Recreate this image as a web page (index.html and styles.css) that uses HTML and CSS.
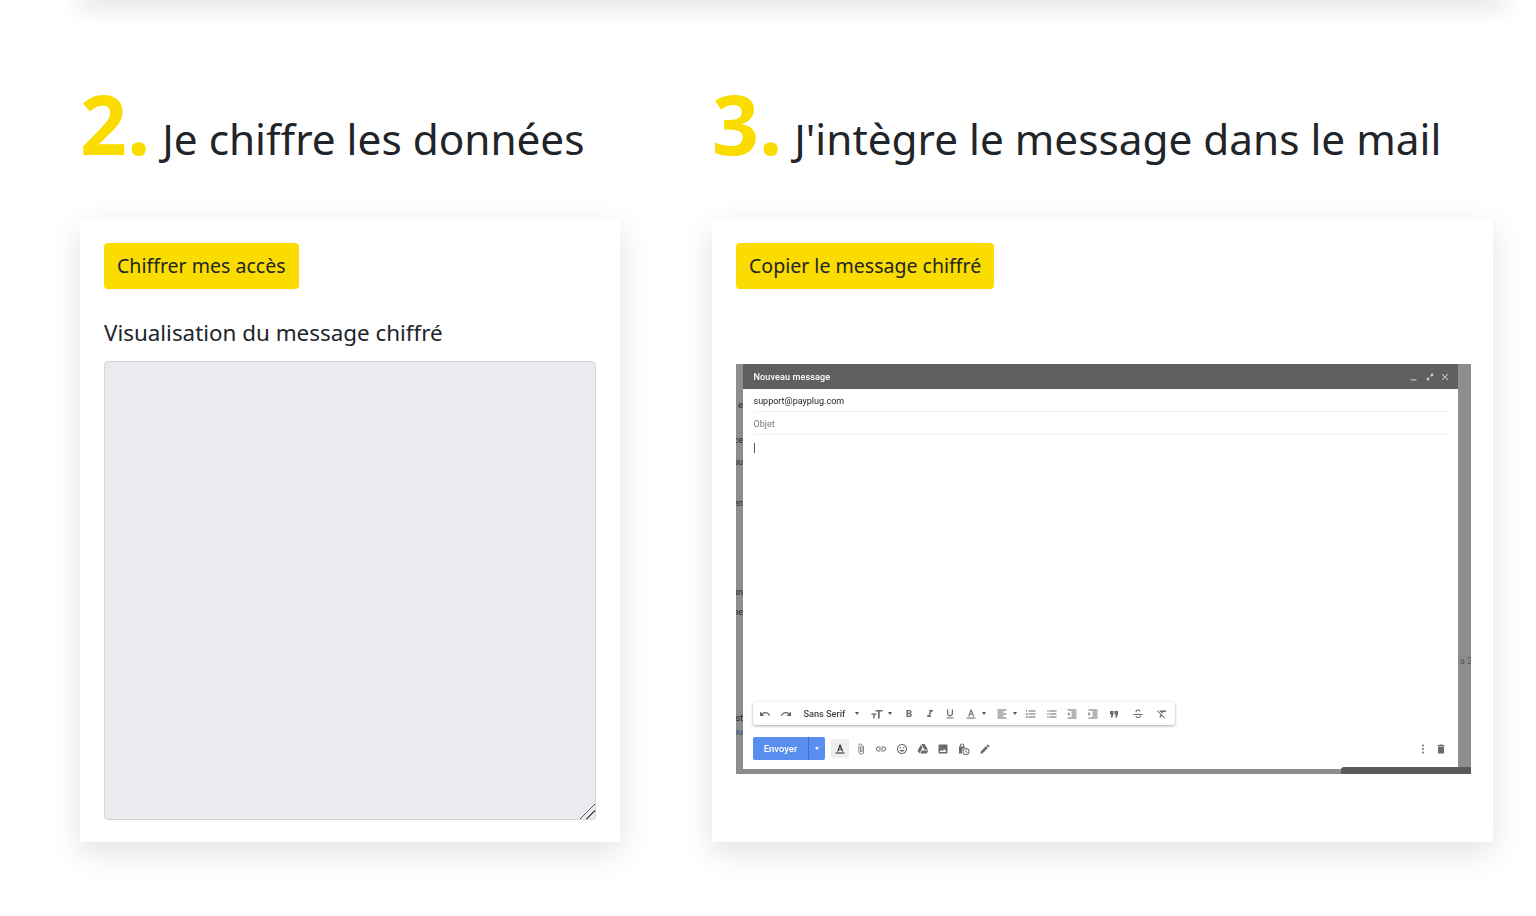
FILE: index.html
```html
<!DOCTYPE html>
<html lang="fr">
<head>
<meta charset="utf-8">
<title>Chiffrement</title>
<link rel="stylesheet" href="styles.css">
</head>
<body>
<div class="top-edge"></div>
<main class="steps">
  <h2 class="step-title"><span class="num">2.</span> Je chiffre les données</h2>
  <h2 class="step-title"><span class="num">3.</span> J'intègre le message dans le mail</h2>
  <section class="card">
    <button class="btn">Chiffrer mes accès</button>
    <label class="field-label" for="out">Visualisation du message chiffré</label>
    <textarea id="out" class="output" disabled></textarea>
  </section>
  <section class="card">
    <button class="btn">Copier le message chiffré</button>
    <figure class="shot">
      <span class="bg-t t1">e</span><span class="bg-t t2">ce</span><span class="bg-t t3">su</span><span class="bg-t t4">en</span><span class="bg-t t5">un</span><span class="bg-t t6">ne</span><span class="bg-t t7">st</span><span class="bg-t t8">ou</span><span class="bg-t t9">a 2</span>
      <div class="compose">
        <div class="c-head">
          <span class="c-title">Nouveau message</span>
          <span class="c-win">
            <svg class="wi" viewBox="0 0 10 10"><path d="M1 8h7v1.200H1z"/></svg>
            <svg class="wi" viewBox="0 0 10 10"><path d="M5.500 1H9v3.500L7.800 3.200 6.300 4.700 5.300 3.700 6.800 2.200zM4.500 9H1V5.500l1.200 1.300 1.500-1.500 1 1-1.500 1.500z"/></svg>
            <svg class="wi" viewBox="0 0 10 10"><path d="M1.700 1L5 4.300 8.300 1 9 1.700 5.700 5 9 8.300 8.300 9 5 5.700 1.700 9 1 8.300 4.300 5 1 1.700z"/></svg>
          </span>
        </div>
        <div class="c-row to">support@payplug.com</div>
        <div class="c-row subject">Objet</div>
        <div class="c-body"><span class="caret"></span></div>
        <div class="fmt">
          <svg class="ic" viewBox="0 0 24 24"><path d="M12.500 8c-2.650 0-5.050.99-6.900 2.600L2 7v9h9l-3.620-3.620c1.390-1.160 3.160-1.880 5.120-1.880 3.540 0 6.550 2.310 7.600 5.500l2.370-.78C21.080 11.030 17.150 8 12.500 8z"/></svg>
          <svg class="ic" viewBox="0 0 24 24"><path d="M18.400 10.600C16.550 8.990 14.150 8 11.500 8c-4.650 0-8.580 3.030-9.960 7.220L3.900 16c1.050-3.190 4.050-5.500 7.600-5.500 1.950 0 3.730.72 5.120 1.880L13 16h9V7l-3.600 3.600z"/></svg>
          <span class="font-name">Sans Serif</span><i class="tri wide"></i>
          <svg class="ic" viewBox="0 0 24 24"><path d="M9 4v3.200h5V21h3.400V7.200H23V4zM1 11v2.600h3.500V21h2.800v-7.400H11V11z"/></svg><i class="tri t-size"></i>
          <svg class="ic" viewBox="0 0 24 24"><path d="M15.600 10.790c.97-.67 1.650-1.770 1.650-2.790 0-2.260-1.750-4-4-4H7v14h7.040c2.090 0 3.710-1.700 3.710-3.790 0-1.520-.86-2.820-2.150-3.420zM10 6.500h3c.83 0 1.500.67 1.500 1.500s-.67 1.500-1.500 1.500h-3v-3zm3.500 9H10v-3h3.500c.83 0 1.500.67 1.500 1.500s-.67 1.500-1.500 1.500z"/></svg>
          <svg class="ic" viewBox="0 0 24 24"><path d="M10 4v3h2.210l-3.420 8H6v3h8v-3h-2.210l3.420-8H18V4z"/></svg>
          <svg class="ic" viewBox="0 0 24 24"><path d="M12 17c3.310 0 6-2.690 6-6V3h-2.500v8c0 1.930-1.570 3.500-3.500 3.500S8.500 12.930 8.500 11V3H6v8c0 3.310 2.690 6 6 6zm-7 2v2h14v-2H5z"/></svg>
          <svg class="ic" viewBox="0 0 24 24"><path d="M3 19h18v2H3zM11 3h2l5.500 14h-2.300l-1.200-3.300H9.900L8.700 17H6.400zm1 2.800L10.600 12h3z"/></svg><i class="tri t-color"></i>
          <svg class="ic" viewBox="0 0 24 24"><path d="M15 15H3v2h12v-2zm0-8H3v2h12V7zM3 13h18v-2H3v2zm0 8h18v-2H3v2zM3 3v2h18V3H3z"/></svg><i class="tri t-align"></i>
          <svg class="ic" viewBox="0 0 24 24"><path d="M2 17h2v.5H3v1h1v.5H2v1h3v-4H2v1zm1-9h1V4H2v1h1v3zm-1 3h1.800L2 13.100v.9h3v-1H3.200L5 10.900V10H2v1zm5-6v2h14V5H7zm0 14h14v-2H7v2zm0-6h14v-2H7v2z"/></svg>
          <svg class="ic" viewBox="0 0 24 24"><path d="M4 10.500c-.83 0-1.500.67-1.500 1.500s.67 1.500 1.500 1.500 1.500-.67 1.500-1.500-.67-1.500-1.500-1.500zm0-6c-.83 0-1.500.67-1.500 1.500S3.170 7.500 4 7.500 5.500 6.830 5.500 6 4.830 4.500 4 4.500zm0 12c-.83 0-1.500.68-1.500 1.500s.68 1.500 1.500 1.500 1.500-.68 1.500-1.500-.67-1.500-1.500-1.500zM7 19h14v-2H7v2zm0-6h14v-2H7v2zm0-8v2h14V5H7z"/></svg>
          <svg class="ic" viewBox="0 0 24 24"><path d="M11 17h10v-2H11v2zm-8-5l4 4V8l-4 4zm0 9h18v-2H3v2zM3 3v2h18V3H3zm8 6h10V7H11v2zm0 4h10v-2H11v2z"/></svg>
          <svg class="ic" viewBox="0 0 24 24"><path d="M3 21h18v-2H3v2zM3 8v8l4-4-4-4zm8 9h10v-2H11v2zM3 3v2h18V3H3zm8 6h10V7H11v2zm0 4h10v-2H11v2z"/></svg>
          <svg class="ic" viewBox="0 0 24 24"><path d="M4 6h7v7l-2.500 6H5l2-6H4zM13 6h7v7l-2.500 6H14l2-6h-3z"/></svg>
          <svg class="ic st" viewBox="0 0 24 24"><path d="M3 12h18v2H3zM7 7c0-2.200 2.200-4 5-4s4.600 1.400 5 3.400l-2.300.5C14.400 5.800 13.500 5 12 5c-1.500 0-2.600.8-2.600 2 0 .6.200 1 .6 1.400H7.500C7.200 8 7 7.500 7 7zm8.500 8h2.400c.1.300.1.600.1 1 0 2.300-2.200 4-5.700 4-3 0-5-1.500-5.500-3.700l2.300-.5c.3 1.400 1.600 2.200 3.300 2.200 1.900 0 3.300-.8 3.300-2.100 0-.3-.1-.6-.2-.9z"/></svg>
          <svg class="ic cl" viewBox="0 0 24 24"><path d="M3.270 5L2 6.270l6.970 6.970L6.500 19h3l1.570-3.660L16.730 21 18 19.730 3.550 5.270 3.270 5zM6 5v.18L8.820 8h2.400l-.72 1.680 2.100 2.100L14.210 8H20V5H6z"/></svg>
        </div>
        <div class="actions">
          <span class="send"><span class="send-l">Envoyer</span><span class="send-r"><i class="tri lt"></i></span></span>
          <span class="a-box"><svg class="ic dk" viewBox="0 0 24 24"><path d="M3 19h18v2H3zM11 3h2l5.500 14h-2.300l-1.200-3.300H9.900L8.700 17H6.400zm1 2.800L10.600 12h3z"/></svg></span>
          <span class="tools">
            <svg class="ic" viewBox="0 0 24 24"><path d="M16.500 6v11.500c0 2.210-1.790 4-4 4s-4-1.790-4-4V5c0-1.380 1.120-2.500 2.500-2.500s2.500 1.120 2.500 2.500v10.500c0 .55-.45 1-1 1s-1-.45-1-1V6H10v9.500c0 1.380 1.120 2.500 2.500 2.500s2.500-1.120 2.500-2.500V5c0-2.210-1.790-4-4-4S7 2.790 7 5v12.500c0 3.040 2.460 5.500 5.500 5.500s5.500-2.460 5.500-5.500V6h-1.500z"/></svg>
            <svg class="ic" viewBox="0 0 24 24"><path d="M3.900 12c0-1.710 1.390-3.100 3.100-3.100h4V7H7c-2.760 0-5 2.240-5 5s2.240 5 5 5h4v-1.900H7c-1.710 0-3.100-1.390-3.100-3.100zM8 13h8v-2H8v2zm9-6h-4v1.900h4c1.710 0 3.100 1.390 3.100 3.100s-1.390 3.100-3.100 3.100h-4V17h4c2.760 0 5-2.240 5-5s-2.240-5-5-5z"/></svg>
            <svg class="ic" viewBox="0 0 24 24"><path d="M11.990 2C6.470 2 2 6.480 2 12s4.470 10 9.990 10C17.520 22 22 17.520 22 12S17.520 2 11.990 2zM12 20c-4.420 0-8-3.580-8-8s3.580-8 8-8 8 3.580 8 8-3.580 8-8 8zm3.500-9c.83 0 1.500-.67 1.500-1.500S16.330 8 15.500 8 14 8.670 14 9.500s.67 1.500 1.500 1.500zm-7 0c.83 0 1.500-.67 1.500-1.500S9.330 8 8.500 8 7 8.670 7 9.500 7.670 11 8.500 11zm3.500 6.500c2.330 0 4.310-1.460 5.110-3.500H6.890c.8 2.040 2.780 3.500 5.110 3.500z"/></svg>
            <svg class="ic" viewBox="0 0 24 24"><path d="M7.710 3.500L1.150 15l3.430 6 6.550-11.500L7.710 3.500zM9.730 15l-3.430 6h13.120l3.430-6H9.730zM21.850 13.500L15.290 2H8.430l6.560 11.500h6.860z"/></svg>
            <svg class="ic" viewBox="0 0 24 24"><path d="M21 19V5c0-1.100-.9-2-2-2H5c-1.100 0-2 .9-2 2v14c0 1.100.9 2 2 2h14c1.100 0 2-.9 2-2zM8.500 13.500l2.500 3.010L14.500 12l4.500 6H5l3.500-4.500z"/></svg>
            <svg class="ic" viewBox="0 0 24 24"><path d="M8 1a4.500 4.500 0 0 1 4.500 4.500V7H14v2.200A8 8 0 0 0 8.600 21H2V7h1.500V5.500A4.500 4.500 0 0 1 8 1zm0 2a2.500 2.500 0 0 0-2.500 2.500V7h5V5.500A2.500 2.500 0 0 0 8 3zM16 10a7 7 0 1 1 0 14 7 7 0 0 1 0-14zm0 2a5 5 0 1 0 0 10 5 5 0 0 0 0-10zm-1 1.500h1.800v3.700l2.700 1.600-.9 1.400-3.600-2.200z"/></svg>
            <svg class="ic" viewBox="0 0 24 24"><path d="M20.710 7.040c.39-.39.39-1.020 0-1.410l-2.340-2.340c-.39-.39-1.020-.39-1.410 0l-1.830 1.830 3.750 3.750 1.830-1.830zM3 17.250V21h3.750L17.810 9.940l-3.750-3.750L3 17.250z"/></svg>
          </span>
          <span class="end">
            <svg class="ic" viewBox="0 0 24 24"><circle cx="12" cy="5" r="2"/><circle cx="12" cy="12" r="2"/><circle cx="12" cy="19" r="2"/></svg>
            <svg class="ic" viewBox="0 0 24 24"><path d="M6 19c0 1.100.9 2 2 2h8c1.100 0 2-.9 2-2V7H6v12zM19 4h-3.500l-1-1h-5l-1 1H5v2h14V4z"/></svg>
          </span>
        </div>
      </div>
      <span class="dock"></span>
    </figure>
  </section>
</main>
</body>
</html>
```
FILE: styles.css
```css
* { box-sizing: border-box; }
html, body { height: 100%; }
body {
  margin: 0;
  background: #fff;
  color: #212529;
  font-family: "Noto Sans", "Open Sans", sans-serif;
  overflow: hidden;
}
.top-edge {
  height: 0;
  margin: 0 36px 0 84px;
  box-shadow: 0 0 22px 5px rgba(0, 0, 0, .2);
}
.steps {
  display: grid;
  grid-template-columns: 540px 781px;
  grid-template-rows: auto 623px;
  column-gap: 92px;
  padding: 69px 0 0 80px;
}
.step-title {
  margin: 0 0 41px;
  height: 109px;
  font-size: 42.3px;
  font-weight: 400;
  line-height: 109px;
  white-space: nowrap;
}
.num {
  color: #fadc00;
  font-size: 82px;
  font-weight: 700;
  margin-right: 1px;
  font-family: "Open Sans", "Noto Sans", sans-serif;
}
.card {
  background: #fff;
  padding: 24px 24px 22px;
  box-shadow: 0 10px 30px rgba(0, 0, 0, .12);
  display: flex;
  flex-direction: column;
  align-items: flex-start;
}
.btn {
  height: 46px;
  padding: 0 13px 2px;
  border: 0;
  border-radius: 4px;
  background: #fadc00;
  color: #212529;
  font: 400 19.55px "Noto Sans", sans-serif;
}
.field-label {
  margin-top: 27px;
  font-size: 22.4px;
  line-height: 34px;
}
.output {
  display: block;
  width: 100%;
  flex: 1;
  margin-top: 11px;
  background: #e9ebef;
  border: 1px solid #ced4da;
  border-radius: 4px;
  resize: vertical;
}
.output::-webkit-resizer {
  background: linear-gradient(135deg, transparent 47%, #555 47% 53%, transparent 53% 68%, #555 68% 74%, transparent 74%);
}
.shot {
  position: relative;
  margin: 75px 0 0;
  width: 735px;
  height: 410px;
  background: #8d8d8d;
  overflow: hidden;
  filter: blur(.25px);
}
.bg-t {
  position: absolute;
  left: 0;
  width: 7px;
  overflow: hidden;
  font: 9px Roboto, sans-serif;
  color: #222;
  white-space: nowrap;
  direction: rtl;
}
.t1 { top: 36px; }
.t2 { top: 71px; }
.t3 { top: 93px; }
.t4 { top: 134px; }
.t5 { top: 223px; }
.t6 { top: 243px; }
.t7 { top: 349px; }
.t8 { top: 363px; color: #2a4d8a; }
.t9 { top: 292px; left: 724px; width: 11px; direction: ltr; color: #555; }
.dock {
  position: absolute;
  right: 0;
  bottom: 0;
  width: 130px;
  height: 7px;
  background: #5a5a5a;
  border-radius: 3px 0 0 0;
}
.compose {
  position: absolute;
  left: 7px;
  top: 0;
  width: 715px;
  height: 405px;
  background: #fff;
  display: flex;
  flex-direction: column;
  font-family: Roboto, sans-serif;
}
.c-head {
  height: 25px;
  flex: none;
  background: #5f5f5f;
  color: #fff;
  display: flex;
  align-items: center;
  justify-content: space-between;
  padding: 0 9px 0 10.5px;
  font-size: 9.1px;
  font-weight: 500;
  letter-spacing: .1px;
}
.c-win { display: flex; gap: 7.5px; }
.wi { width: 8px; height: 8px; fill: #ddd; }
.c-row {
  margin: 0 10px 0 10.5px;
  height: 23px;
  flex: none;
  padding-top: 1px;
  line-height: 23px;
  font-size: 9px;
  border-bottom: 1px solid #f1f1f1;
  color: #222;
}
.subject { color: #777; }
.c-body { flex: 1; padding: 8px 0 0 10.5px; }
.caret { display: block; width: 1px; height: 10px; background: #555; }
.fmt {
  display: flex;
  align-items: center;
  width: 422px;
  height: 23px;
  margin: 0 0 12px 10px;
  padding-left: 6px;
  background: #fff;
  border-radius: 2px;
  box-shadow: 0 1px 3px rgba(0, 0, 0, .35);
  flex: none;
  gap: 8.7px;
}
.ic { width: 12px; height: 12px; fill: #6b6b6b; flex: none; }
.font-name { font-size: 9.2px; font-weight: 500; color: #444; margin-left: 3px; }
.tri {
  width: 0;
  height: 0;
  border: 2.5px solid transparent;
  border-top: 3px solid #555;
  border-bottom: 0;
  flex: none;
}
.tri.wide { margin-left: 1px; margin-right: 3px; }
.tri.t-size { margin-left: -3px; margin-right: 2px; }
.tri.t-color { margin-left: -4px; margin-right: 1px; }
.tri.t-align { margin-left: -3px; margin-right: -1px; }
.tri.lt { margin: 0; border-top-color: #fff; }
.st { margin-left: 4px; }
.cl { margin-left: 3px; }
.actions {
  display: flex;
  align-items: center;
  height: 23px;
  margin: 0 0 9px 10px;
  flex: none;
}
.send {
  display: flex;
  width: 72px;
  height: 23px;
  background: #5a8eee;
  color: #fff;
  border-radius: 2px;
  font-size: 9.5px;
  font-weight: 500;
  line-height: 24px;
}
.send-l { width: 56px; text-align: center; border-right: 1px solid #3f6fc9; }
.send-r { flex: 1; display: flex; align-items: center; justify-content: center; }
.a-box {
  width: 18px;
  height: 19px;
  margin-left: 6px;
  background: #eee;
  border-radius: 2px;
  display: flex;
  align-items: center;
  justify-content: center;
}
.dk { fill: #222; }
.tools { display: flex; gap: 8.7px; margin-left: 5.500px; }
.end { display: flex; gap: 6px; margin-left: auto; margin-right: 11px; }
```
